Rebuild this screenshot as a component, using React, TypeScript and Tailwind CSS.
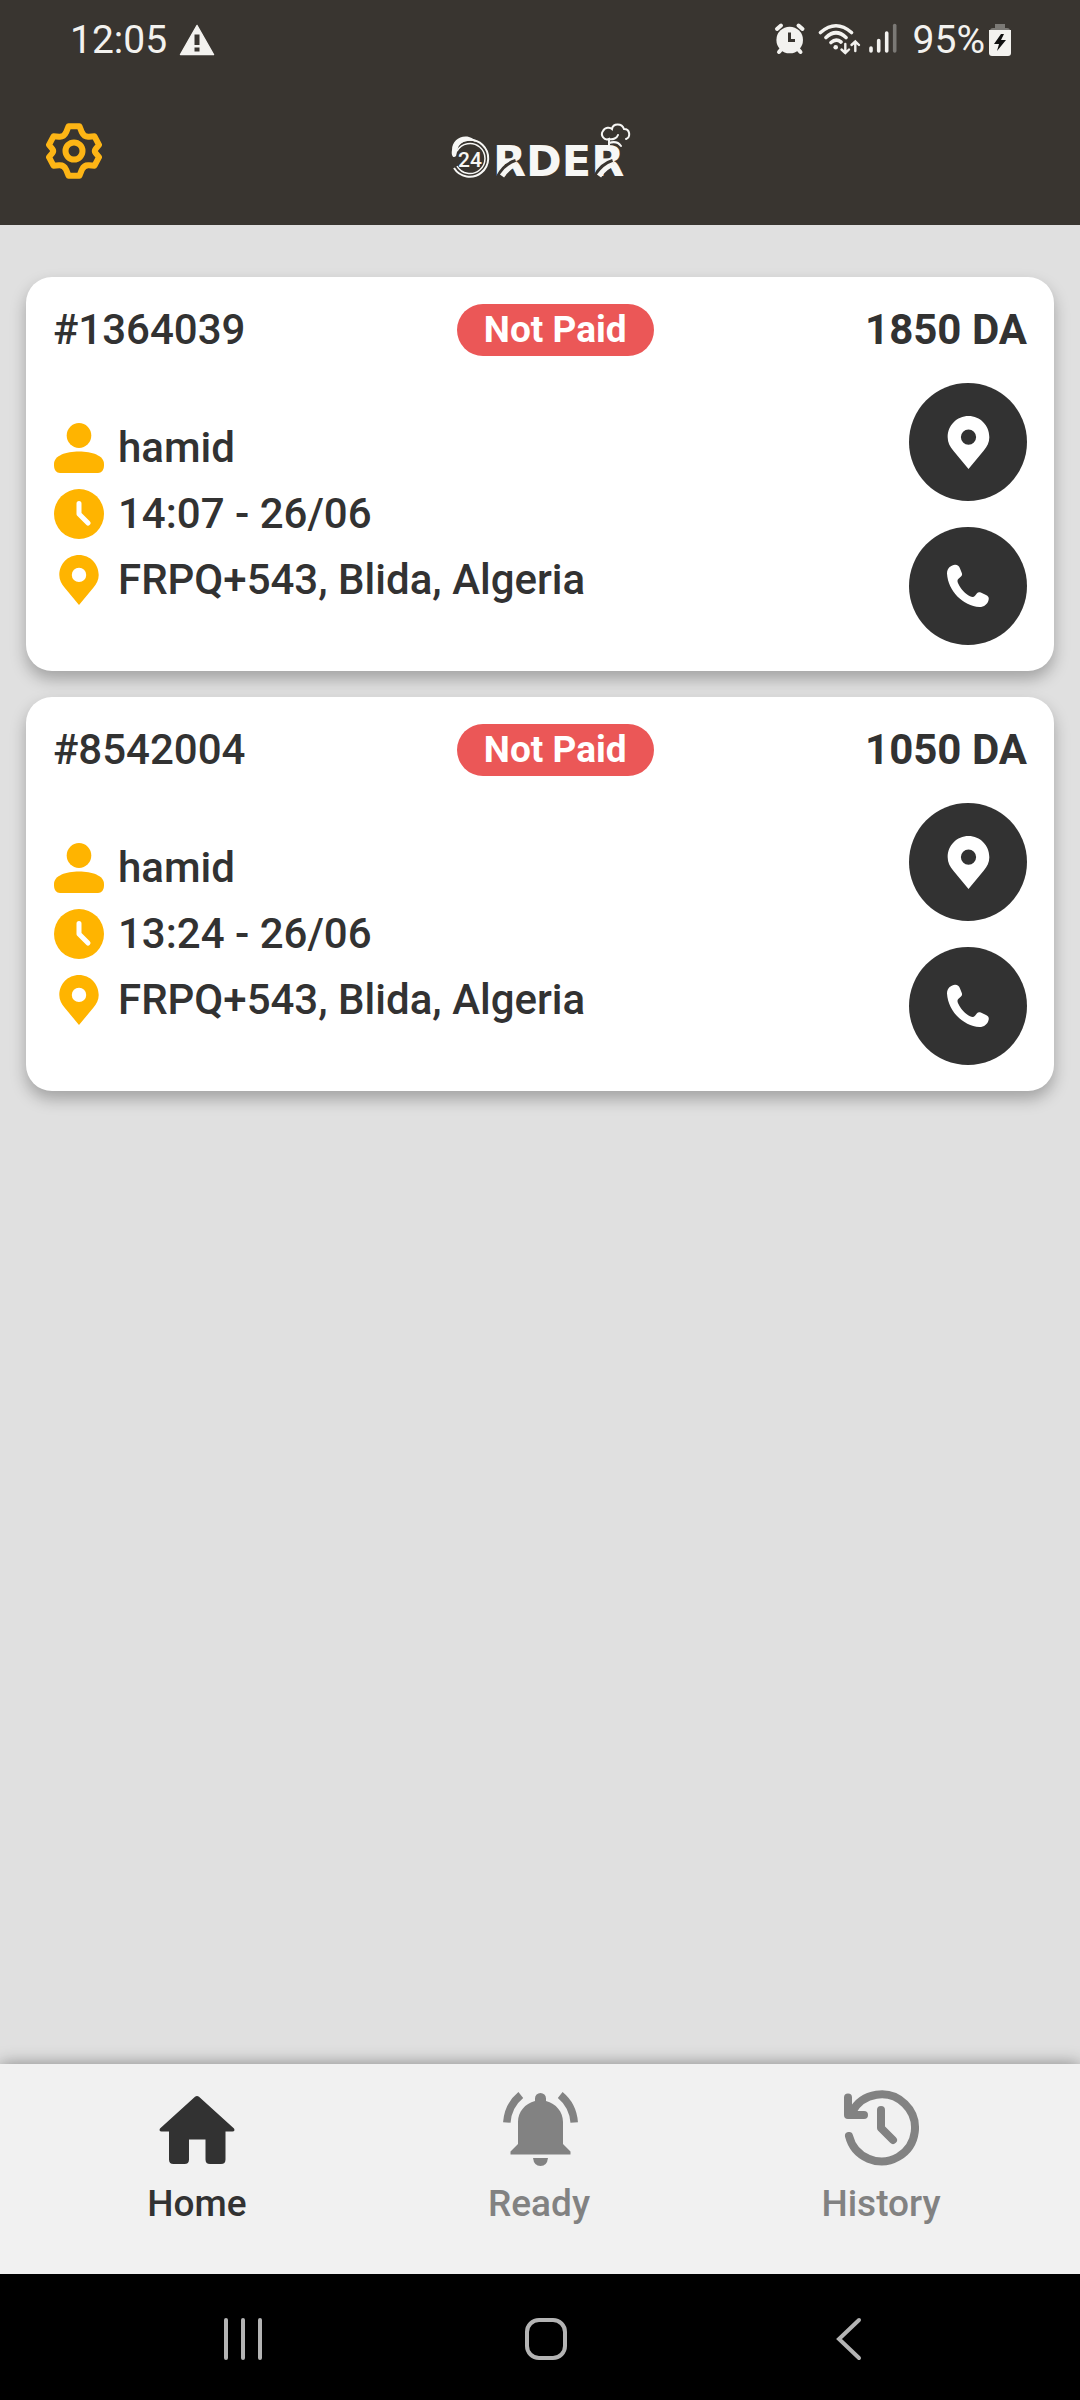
import type { ReactNode } from "react";

type Order = {
  id: string;
  status: string;
  price: string;
  customer: string;
  time: string;
  address: string;
};

const orders: Order[] = [
  {
    id: "#1364039",
    status: "Not Paid",
    price: "1850 DA",
    customer: "hamid",
    time: "14:07 - 26/06",
    address: "FRPQ+543, Blida, Algeria",
  },
  {
    id: "#8542004",
    status: "Not Paid",
    price: "1050 DA",
    customer: "hamid",
    time: "13:24 - 26/06",
    address: "FRPQ+543, Blida, Algeria",
  },
];

function PersonIcon() {
  return (
    <svg className="size-[52px] shrink-0" viewBox="0 0 52 52" fill="#ffb400" aria-hidden="true">
      <ellipse cx="26" cy="13.5" rx="12.3" ry="12.5" />
      <path d="M1 42C1 33.5 13 29.5 26 29.5S51 33.5 51 42V43.5C51 48 48.5 51 45 51H7C3.5 51 1 48 1 43.5Z" />
    </svg>
  );
}

function ClockIcon() {
  return (
    <svg className="size-[52px] shrink-0" viewBox="0 0 52 52" fill="none" aria-hidden="true">
      <circle cx="26" cy="26" r="25" fill="#ffb400" />
      <path d="M26 15.5V26L35 35" stroke="#fff" strokeWidth="5" strokeLinecap="round" strokeLinejoin="round" />
    </svg>
  );
}

function PinIcon({ className }: { className: string }) {
  return (
    <svg className={className} viewBox="0 0 52 52" fill="currentColor" aria-hidden="true">
      <path
        fillRule="evenodd"
        d="M26 1C15 1 6.3 9.8 6.3 21C6.3 26 8.5 30 11.5 33.5L26 51L40.5 33.5C43.5 30 45.7 26 45.7 21C45.7 9.8 37 1 26 1ZM26 13.7A7.2 7.2 0 1 1 26 28.1A7.2 7.2 0 1 1 26 13.7Z"
      />
    </svg>
  );
}

function PhoneIcon() {
  return (
    <svg className="size-[44px]" viewBox="0 0 44 44" fill="currentColor" aria-hidden="true">
      <path d="M1 9.5C1 4 5.5 1 9 0.8C11.5 0.7 13 2 14 4.5L15.8 9C16.4 10.5 16 11.5 15 12.5L12.5 14.8C11 16.2 11.3 17.8 12.3 19.8C15.5 26 19 29.7 24 32.2C26.3 33.4 27.7 33.2 29 31.7L31 29.2C32 28 33.5 28 34.8 28.6L39.5 30.7C42.5 32 43.2 33.5 42.6 36C41.6 40.3 38 43 33.5 43C17 42 2 27 1 9.5Z" />
    </svg>
  );
}

function GearIcon() {
  return (
    <svg className="size-[56px]" viewBox="0 0 56 56" fill="none" stroke="#fdb515" strokeWidth="6" strokeLinejoin="round" aria-hidden="true">
      <circle cx="28" cy="28" r="8.5" />
      <path d="M22.5 3.3H33.5L36 9.6Q38.2 14.3 43 13.8L48.5 13.3L53 21.8L49.7 25.8Q48 28 49.7 30.2L53 34.2L48.5 42.7L43 42.2Q38.2 41.7 36 46.4L33.5 52.7H22.5L20 46.4Q17.8 41.7 13 42.2L7.5 42.7L3 34.2L6.3 30.2Q8 28 6.3 25.8L3 21.8L7.5 13.3L13 13.8Q17.8 14.3 20 9.6Z" />
    </svg>
  );
}

function Logo() {
  return (
    <svg className="h-[72px] w-[184px]" viewBox="0 0 184 72" role="img" aria-label="24 Order">
      {/* plate with the splash on its rim */}
      <g fill="none" stroke="#f7f7f5">
        <path d="M7 32A18.5 18.5 0 1 1 6 53" strokeWidth="2" />
        <path d="M9 36A15 15 0 1 1 9 51" strokeWidth="1.5" />
      </g>
      <path d="M4 35C4 26 12 20 21 22C25 23 27 25 28 27C20 24 12 27 10 33L8 41C5 44 3 40 4 35Z" fill="#f7f7f5" />
      <text x="10" y="52" fill="#f7f7f5" className="font-['Roboto',sans-serif] text-[21px] font-medium">24</text>
      <text x="45" y="61" fill="#f7f7f5" className="font-['DejaVu_Sans',sans-serif] text-[43px] font-bold">RDER</text>
      {/* ribbon across both Rs */}
      <g fill="none">
        <path d="M51 62C55 54 61 49 68 47M148 62C152 54 158 49 165 47" stroke="#393530" strokeWidth="6" />
        <path d="M54 61C58 55 63 51 69 49M151 61C155 55 160 51 166 49" stroke="#f7f7f5" strokeWidth="5" />
      </g>
      {/* chef hat */}
      <path
        d="M161 30V24C156 26 152 20 155 16C157 12 162 12 164 14C165 8 174 8 176 14C182 14 183 22 178 24M161 24C165 25 169 23 170 20M161 28C167 26 171 28 173 31"
        fill="none"
        stroke="#f7f7f5"
        strokeWidth="2"
        strokeLinecap="round"
      />
    </svg>
  );
}

function StatusBar() {
  return (
    <div className="flex h-[76px] items-center justify-between pt-[3px] pr-[69px] pl-[70px] text-[39px] leading-[48px] text-[#f3f2ef]">
      <div className="flex items-center gap-3">
        <span>12:05</span>
        <svg className="h-[32px] w-[36px]" viewBox="0 0 36 32" aria-hidden="true">
          <path d="M18 1.5L34.5 30.5H1.5Z" fill="#f3f2ef" stroke="#f3f2ef" strokeWidth="1.5" strokeLinejoin="round" />
          <path d="M15.5 10.5H20.5V21H15.5ZM15.5 23.5H20.5V27.5H15.5Z" fill="#393530" />
        </svg>
      </div>
      <div className="flex items-center gap-1">
        <svg className="h-[36px] w-[138px]" viewBox="0 2 138 36" fill="none" stroke="#f3f2ef" strokeLinecap="round" aria-hidden="true">
          {/* alarm */}
          <circle cx="18.7" cy="20" r="13.3" fill="#f3f2ef" stroke="none" />
          <path d="M6 9L10 5.5M27.5 5.5L31.5 9M8 32L11 28.5M29.5 32L26.5 28.5" strokeWidth="4" />
          <path d="M18.5 12.5V20.5H24" stroke="#393530" strokeWidth="3" strokeLinecap="butt" />
          {/* wifi */}
          <path d="M49.5 12.5Q65 -1 80.5 12.5M55 17.5Q65 8 75 17.5M60 22.5Q65 18 70 22" strokeWidth="3.6" />
          <circle cx="64.7" cy="27.3" r="2.3" fill="#f3f2ef" stroke="none" />
          <path d="M74.3 24V33M70.5 29.5L74.3 33L78 29.5M84.3 31V21.5M80.5 25L84.3 21.5L88 25" strokeWidth="2.4" />
          {/* signal */}
          <path d="M100 28V31M107.7 20.5V31M115.7 13V31" strokeWidth="3.6" />
          <path d="M123.7 5.5V31" stroke="#7b7975" strokeWidth="3.6" />
        </svg>
        <span>95%</span>
        <svg className="h-[32px] w-[22px]" viewBox="0 0 22 32" aria-hidden="true">
          <path d="M1 7Q1 4 4 4H6V0H16V4H18Q21 4 21 7Z" fill="#7b7975" />
          <path d="M0 6H22V29Q22 32 19 32H3Q0 32 0 29Z" fill="#f3f2ef" />
          <path d="M12 10L5 20H10L8 27L17 16H12L15 10Z" fill="#111" />
        </svg>
      </div>
    </div>
  );
}

function InfoRow({ icon, children }: { icon: ReactNode; children: ReactNode }) {
  return (
    <li className="flex h-[66px] items-center gap-[13px]">
      {icon}
      <span>{children}</span>
    </li>
  );
}

function OrderCard({ order }: { order: Order }) {
  return (
    <article className="rounded-[26px] bg-white px-[27px] pt-[26px] pb-[26px] text-[42px] leading-[52px] font-medium text-[#323232] shadow-[0_8px_16px_rgba(0,0,0,0.28)]">
      <div className="flex h-[53px] items-center justify-between">
        <h2>{order.id}</h2>
        <span className="rounded-full bg-[#eb5757] px-[27px] text-[37px] font-bold text-white">{order.status}</span>
        <span className="font-bold">{order.price}</span>
      </div>
      <div className="mt-[27px] flex items-center justify-between">
        <ul>
          <InfoRow icon={<PersonIcon />}>{order.customer}</InfoRow>
          <InfoRow icon={<ClockIcon />}>{order.time}</InfoRow>
          <InfoRow icon={<PinIcon className="size-[52px] shrink-0 text-[#ffb400]" />}>{order.address}</InfoRow>
        </ul>
        <div className="flex flex-col gap-[26px]">
          <button type="button" aria-label="Show on map" className="flex size-[118px] items-center justify-center rounded-full bg-[#323232] text-white">
            <PinIcon className="size-[55px]" />
          </button>
          <button type="button" aria-label="Call customer" className="flex size-[118px] items-center justify-center rounded-full bg-[#323232] text-white">
            <PhoneIcon />
          </button>
        </div>
      </div>
    </article>
  );
}

function BottomNav() {
  return (
    <nav className="relative grid h-[210px] grid-cols-3 bg-[#f1f1f1] pr-[28px] pl-[26px] text-[37px] leading-[42px] font-medium text-[#828282] shadow-[0_0_16px_rgba(0,0,0,0.4)]">
      <a href="#home" className="flex flex-col items-center gap-[14px] pt-[25px] text-[#323232]" aria-current="page">
        <svg className="size-[80px]" viewBox="0 0 80 80" fill="currentColor" aria-hidden="true">
          <path d="M38 7.8Q40 6.3 42 7.8L77 39.5Q78.5 42 75.5 42.5H68.5V70.5Q68.5 75 64 75H53Q48.5 75 48.5 70.5V50.5H32V70.5Q32 75 27.5 75H16.5Q12 75 12 70.5V42.5H4.5Q1.5 42 3 39.5Z" />
        </svg>
        Home
      </a>
      <a href="#ready" className="flex flex-col items-center gap-[14px] pt-[25px]">
        <svg className="size-[80px]" viewBox="0 0 80 80" fill="currentColor" aria-hidden="true">
          <path d="M36 12V9.5A5.5 5.5 0 0 1 47 9.5V12C57 14.5 64 23 64 33V55L71.500 62.500V65.500H11.500V62.500L19 55V33C19 23 26 14.500 36 12Z" />
          <path d="M34 69H49Q48 77 41.500 77Q35 77 34 69Z" />
          <path d="M7.800 33.500Q9 16.500 21.800 6" fill="none" stroke="currentColor" strokeWidth="7.5" />
          <path d="M75.200 33.500Q74 16.500 61.200 6" fill="none" stroke="currentColor" strokeWidth="7.5" />
        </svg>
        Ready
      </a>
      <a href="#history" className="flex flex-col items-center gap-[14px] pt-[25px]">
        <svg className="size-[80px]" viewBox="0 0 80 80" fill="none" stroke="currentColor" strokeWidth="8" strokeLinecap="round" strokeLinejoin="round" aria-hidden="true">
          <path d="M8 47A33.5 33.5 0 1 0 11 23" />
          <path d="M7 8.5V26H23M40 21V39L52 51" />
        </svg>
        History
      </a>
    </nav>
  );
}

function SystemNav() {
  return (
    <div className="flex h-[126px] items-center justify-between bg-black pt-[3px] pr-[210px] pl-[221px] text-[#b4b4b4]">
      <button type="button" aria-label="Recent apps">
        <svg className="size-[44px]" viewBox="0 0 44 44" fill="none" stroke="currentColor" strokeWidth="4" strokeLinecap="round">
          <path d="M5 3V41M22 3V41M39 3V41" />
        </svg>
      </button>
      <button type="button" aria-label="Home screen">
        <svg className="size-[44px]" viewBox="0 0 44 44" fill="none" stroke="currentColor" strokeWidth="4">
          <rect x="3" y="3" width="38" height="38" rx="12" />
        </svg>
      </button>
      <button type="button" aria-label="Back">
        <svg className="size-[44px]" viewBox="0 0 44 44" fill="none" stroke="currentColor" strokeWidth="4" strokeLinecap="round">
          <path d="M33 3L13 22L33 41" />
        </svg>
      </button>
    </div>
  );
}

export default function App() {
  return (
    <div className="flex min-h-screen flex-col bg-[#e0e0e0] font-['Roboto',sans-serif]">
      <header className="bg-[#393530]">
        <StatusBar />
        <div className="grid h-[149px] grid-cols-3 items-center px-[46px]">
          <button type="button" aria-label="Settings" className="justify-self-start">
            <GearIcon />
          </button>
          <div className="justify-self-center">
            <Logo />
          </div>
        </div>
      </header>
      <main className="flex flex-1 flex-col gap-[26px] px-[26px] pt-[52px] pb-[26px]">
        {orders.map((order) => (
          <OrderCard key={order.id} order={order} />
        ))}
      </main>
      <BottomNav />
      <SystemNav />
    </div>
  );
}
